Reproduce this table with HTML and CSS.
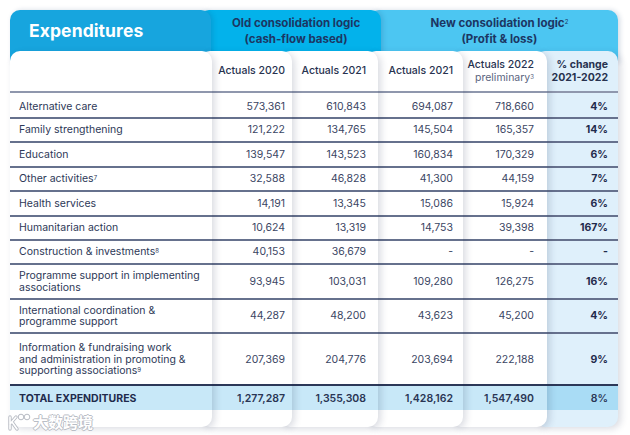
FILE: index.html
```html
<!DOCTYPE html>
<html>
<head>
<meta charset="utf-8">
<link rel="stylesheet" href="styles.css">
</head>
<body>
<div class="sheet">
  <div class="bands">
    <div class="band band-exp"><span class="title">Expenditures</span></div>
    <div class="band band-old"><span class="group">Old consolidation logic<br>(cash-flow based)</span></div>
    <div class="band band-new"><span class="group">New consolidation logic<sup>2</sup><br>(Profit &amp; loss)</span></div>
  </div>
  <div class="cards">
    <div class="col col-label">
      <div class="cell head"></div>
      <div class="cell first"><span>Alternative care</span></div>
      <div class="cell"><span>Family strengthening</span></div>
      <div class="cell"><span>Education</span></div>
      <div class="cell"><span>Other activities<sup>7</sup></span></div>
      <div class="cell"><span>Health services</span></div>
      <div class="cell"><span>Humanitarian action</span></div>
      <div class="cell"><span>Construction &amp; investments<sup>8</sup></span></div>
      <div class="cell two"><span>Programme support in implementing<br>associations</span></div>
      <div class="cell two"><span>International coordination &amp;<br>programme support</span></div>
      <div class="cell three"><span>Information &amp; fundraising work<br>and administration in promoting &amp;<br>supporting associations<sup>9</sup></span></div>
      <div class="cell total"><span>TOTAL EXPENDITURES</span></div>
      <div class="foot"></div>
    </div>
    <div class="col col-num col-a20">
      <div class="cell head">Actuals 2020</div>
      <div class="cell first">573,361</div>
      <div class="cell">121,222</div>
      <div class="cell">139,547</div>
      <div class="cell">32,588</div>
      <div class="cell">14,191</div>
      <div class="cell">10,624</div>
      <div class="cell">40,153</div>
      <div class="cell two">93,945</div>
      <div class="cell two">44,287</div>
      <div class="cell three">207,369</div>
      <div class="cell total">1,277,287</div>
      <div class="foot"></div>
    </div>
    <div class="col col-num col-a21o">
      <div class="cell head">Actuals 2021</div>
      <div class="cell first">610,843</div>
      <div class="cell">134,765</div>
      <div class="cell">143,523</div>
      <div class="cell">46,828</div>
      <div class="cell">13,345</div>
      <div class="cell">13,319</div>
      <div class="cell">36,679</div>
      <div class="cell two">103,031</div>
      <div class="cell two">48,200</div>
      <div class="cell three">204,776</div>
      <div class="cell total">1,355,308</div>
      <div class="foot"></div>
    </div>
    <div class="col col-num col-a21n">
      <div class="cell head">Actuals 2021</div>
      <div class="cell first">694,087</div>
      <div class="cell">145,504</div>
      <div class="cell">160,834</div>
      <div class="cell">41,300</div>
      <div class="cell">15,086</div>
      <div class="cell">14,753</div>
      <div class="cell">-</div>
      <div class="cell two">109,280</div>
      <div class="cell two">43,623</div>
      <div class="cell three">203,694</div>
      <div class="cell total">1,428,162</div>
      <div class="foot"></div>
    </div>
    <div class="col col-num col-a22">
      <div class="cell head"><span>Actuals 2022<br><span class="prelim">preliminary<sup>3</sup></span></span></div>
      <div class="cell first">718,660</div>
      <div class="cell">165,357</div>
      <div class="cell">170,329</div>
      <div class="cell">44,159</div>
      <div class="cell">15,924</div>
      <div class="cell">39,398</div>
      <div class="cell">-</div>
      <div class="cell two">126,275</div>
      <div class="cell two">45,200</div>
      <div class="cell three">222,188</div>
      <div class="cell total">1,547,490</div>
      <div class="foot"></div>
    </div>
    <div class="col col-num col-pct">
      <div class="cell head"><span>% change<br>2021-2022</span></div>
      <div class="cell first">4%</div>
      <div class="cell">14%</div>
      <div class="cell">6%</div>
      <div class="cell">7%</div>
      <div class="cell">6%</div>
      <div class="cell">167%</div>
      <div class="cell">-</div>
      <div class="cell two">16%</div>
      <div class="cell two">4%</div>
      <div class="cell three">9%</div>
      <div class="cell total">8%</div>
      <div class="foot"></div>
    </div>
  </div>
  <div class="watermark">
    <svg width="26" height="20" viewBox="0 0 26 20"><path d="M4 5 L4 17 M4 12 L10 5 M6 10 L11 17" fill="none" stroke="#b8bcc4" stroke-width="3.4" stroke-linecap="round"/><path d="M4 5 L4 17 M4 12 L10 5 M6 10 L11 17" fill="none" stroke="#fff" stroke-width="1.6" stroke-linecap="round"/><circle cx="15" cy="5" r="2.8" fill="#fff" stroke="#b8bcc4" stroke-width="1"/><circle cx="21" cy="5" r="2.8" fill="#fff" stroke="#b8bcc4" stroke-width="1"/></svg>
    <span>大数跨境</span>
  </div>
</div>
</body>
</html>
```
FILE: styles.css
```css
* { box-sizing: border-box; }
html, body { margin: 0; padding: 0; background: #ffffff; }
body {
  font-family: Inter, "Noto Sans", sans-serif;
  color: #2d3857;
  width: 630px;
  height: 435px;
  overflow: hidden;
}
.sheet {
  position: relative;
  padding: 10px 12px 0 10px;
  display: flex;
  flex-direction: column;
}
.bands {
  display: flex;
  height: 53px;
}
.band {
  display: flex;
  align-items: center;
  justify-content: center;
  padding-bottom: 12px;
  border-radius: 10px 10px 0 0;
  box-shadow: 2px 0 5px rgba(20, 60, 110, 0.18);
}
.band-exp {
  width: 202px;
  background: #17a5de;
  justify-content: flex-start;
  padding-left: 19px;
  z-index: 3;
}
.band-old {
  width: 182px;
  margin-left: -12px;
  padding-left: 12px;
  background: #03b2eb;
  z-index: 2;
}
.band-new {
  width: 250px;
  margin-left: -12px;
  padding-left: 12px;
  background: #4cc6f2;
  z-index: 1;
}
.title {
  color: #ffffff;
  font-weight: 700;
  font-size: 17.5px;
  letter-spacing: 0.1px;
}
.group {
  color: #1c3663;
  font-weight: 700;
  font-size: 11.5px;
  line-height: 16px;
  text-align: center;
}
.group sup, .cell sup {
  font-size: 6px;
  vertical-align: top;
  position: relative;
  top: -1px;
  font-weight: 400;
}
.cards {
  display: flex;
  margin-top: -12px;
  z-index: 5;
}
.col {
  background: #ffffff;
  border-radius: 10px;
  box-shadow: 3px 2px 7px rgba(30, 45, 80, 0.16);
  display: flex;
  flex-direction: column;
}
.col-label { width: 202px; z-index: 6; }
.col-num { margin-left: -12px; }
.col-a20 { width: 92px; z-index: 5; }
.col-a21o { width: 98px; z-index: 4; }
.col-a21n { width: 97px; z-index: 3; }
.col-a22 { width: 96px; z-index: 2; }
.col-pct { width: 83px; z-index: 1; background: #dff0fb; }

.cell {
  height: 24.4px;
  display: flex;
  align-items: center;
  font-size: 10.5px;
  line-height: 11.5px;
  border-top: 2px solid #66718d;
  padding-left: 9px;
  color: #2d3857;
}
.cell.head {
  height: 40px;
  border-top: none;
  font-weight: 500;
  color: #27324f;
}
.cell.first { height: 26px; padding-top: 3px; border-top-color: #8f97ad; }
.cell.two { height: 34.5px; }
.cell.three { height: 52px; }
.cell.total {
  height: 26px;
  background: #c8e8f8;
  font-weight: 700;
  border-top-color: #2c3858;
  color: #1f2b4c;
}
.foot { height: 17px; }

.col-num .cell {
  justify-content: flex-end;
  text-align: right;
  color: #3a4563;
}
.col-num .cell.head { color: #27324f; }
.col-num .cell.total { color: #2a3554; font-weight: 600; }
.col-a20 .cell { padding-right: 7px; }
.col-a21o .cell { padding-right: 12px; }
.col-a21n .cell { padding-right: 10px; }
.col-a22 .cell { padding-right: 13px; }
.col-pct .cell { padding-right: 10px; font-weight: 700; color: #1f2b4c; }
.col-pct .cell.total { background: #a9dcf5; }
.col-a22 .cell.head { line-height: 13px; }
.prelim { font-weight: 400; color: #5b6580; }
.col-pct .cell.head { line-height: 13.5px; font-weight: 700; }

.watermark {
  position: absolute;
  left: 6px;
  top: 411px;
  display: flex;
  align-items: center;
  gap: 1px;
  z-index: 10;
}
.watermark span {
  font-family: "Noto Sans CJK SC", sans-serif;
  font-size: 15px;
  font-weight: 700;
  color: #ffffff;
  text-shadow: -1px 0 #b9bdc5, 1px 0 #b9bdc5, 0 -1px #b9bdc5, 0 1px #b9bdc5;
}
```
